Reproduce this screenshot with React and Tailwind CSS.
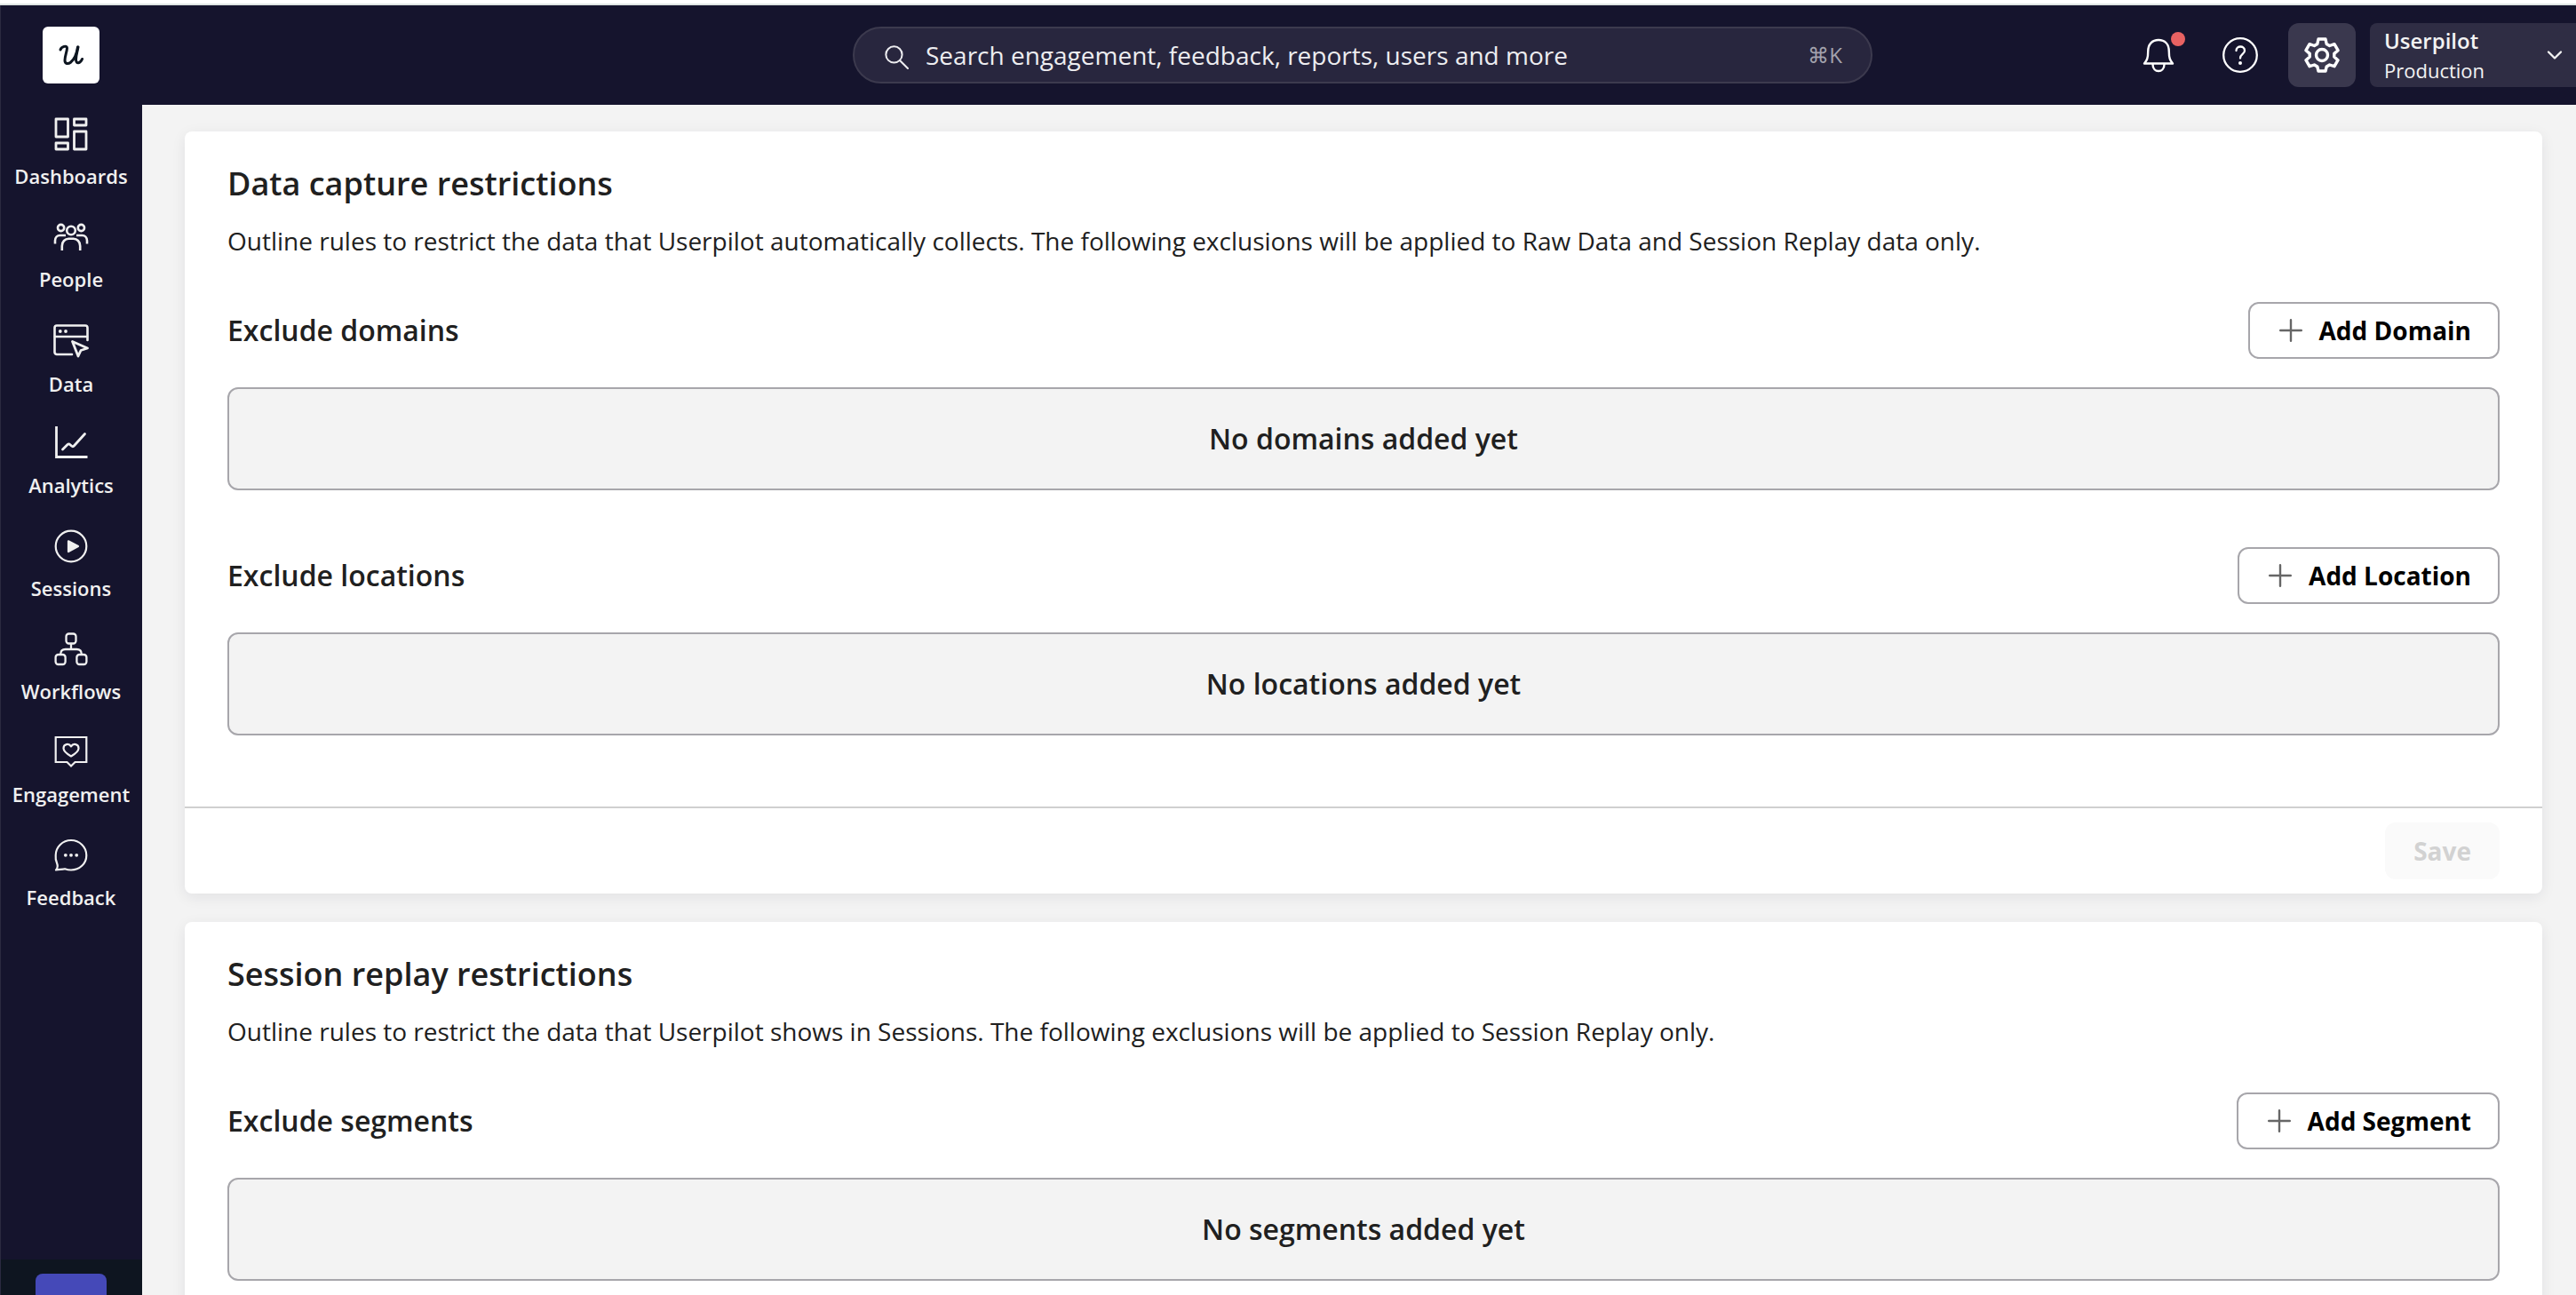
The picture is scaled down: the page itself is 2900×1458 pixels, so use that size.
import { FiChevronDown } from "react-icons/fi";

const navItems = [
  { label: "Dashboards", icon: <DashboardsIcon />, labelClass: "mt-3" },
  { label: "People", icon: <PeopleIcon />, labelClass: "mt-3" },
  { label: "Data", icon: <DataIcon />, labelClass: "mt-3.5" },
  { label: "Analytics", icon: <AnalyticsIcon />, labelClass: "mt-3" },
  { label: "Sessions", icon: <SessionsIcon />, labelClass: "mt-3" },
  { label: "Workflows", icon: <WorkflowsIcon />, labelClass: "mt-3" },
  { label: "Engagement", icon: <EngagementIcon />, labelClass: "mt-3" },
  { label: "Feedback", icon: <FeedbackIcon />, labelClass: "mt-3" },
];

function Svg({ children, className = "size-10", ...rest }) {
  return (
    <svg
      viewBox="0 0 40 40"
      fill="none"
      stroke="currentColor"
      strokeWidth="2.6"
      strokeLinecap="round"
      strokeLinejoin="round"
      className={className}
      {...rest}
    >
      {children}
    </svg>
  );
}

function DashboardsIcon() {
  return (
    <Svg strokeWidth="2.8">
      <rect x="3" y="3" width="13.5" height="20" />
      <rect x="23.5" y="3" width="13.5" height="7" />
      <rect x="3" y="30" width="13.5" height="7" />
      <rect x="23.5" y="17" width="13.5" height="20" />
    </Svg>
  );
}

function PeopleIcon() {
  return (
    <Svg strokeLinecap="butt">
      <circle cx="8.6" cy="9.5" r="3.6" />
      <circle cx="31.4" cy="9.5" r="3.6" />
      <circle cx="20" cy="12.5" r="4.8" />
      <path d="M9.8 35v-5c0-5 3.5-8.2 7.5-8.2h5.4c4 0 7.5 3.2 7.5 8.2v5" />
      <path d="M2 27.5V24c0-3.500 2.500-6 5.500-6H14" />
      <path d="M38 27.500V24c0-3.500-2.500-6-5.500-6H26" />
    </Svg>
  );
}

function DataIcon() {
  return (
    <Svg>
      <path d="M21 36H4a2.500 2.500 0 0 1-2.500-2.500V6A2.500 2.500 0 0 1 4 3.500h32A2.500 2.500 0 0 1 38.500 6V20" />
      <path d="M2 16h36" />
      <path d="M21.500 21.500l17 7.500-7.500 2.500-3 6.500z" strokeWidth="2.8" />
      <circle cx="7.8" cy="10" r="1.9" fill="currentColor" stroke="none" />
      <circle cx="14" cy="10" r="1.9" fill="currentColor" stroke="none" />
    </Svg>
  );
}

function AnalyticsIcon() {
  return (
    <Svg strokeLinecap="butt" strokeLinejoin="miter" strokeWidth="2.8">
      <path d="M3.500 1v34.500h35" />
      <path d="M10.500 27l5.500-5.500c1-.9 2-.8 3 .2l1.500 1.300c1 .9 2 .9 3-.2L35.500 9.500" strokeLinecap="round" />
    </Svg>
  );
}

function SessionsIcon() {
  return (
    <Svg strokeWidth="2.2">
      <circle cx="20" cy="20" r="17.3" />
      <path d="M17 14.300l11 5.700-11 6z" fill="currentColor" />
    </Svg>
  );
}

function WorkflowsIcon() {
  return (
    <Svg strokeWidth="2.3">
      <rect x="14.5" y="2.5" width="11" height="11" rx="3" />
      <rect x="2.6" y="26" width="11" height="11" rx="3" />
      <rect x="26.4" y="26" width="11" height="11" rx="3" />
      <path d="M20 14v6M8.200 25.500c0-4 1.500-5.500 5.500-5.500h12.600c4 0 5.500 1.500 5.500 5.500" />
    </Svg>
  );
}

function EngagementIcon() {
  return (
    <Svg strokeWidth="2.2" strokeLinejoin="miter">
      <path d="M2.700 3h34.600v28H24.500L20 35.500 15.500 31H2.700z" />
      <path
        d="M20 24.500c-5-3-8.500-5.500-8.500-9 0-5 6-6 8.500-2.200 2.500-3.800 8.500-2.800 8.500 2.200 0 3.500-3.500 6-8.500 9z"
        strokeLinejoin="round"
      />
    </Svg>
  );
}

function FeedbackIcon() {
  return (
    <Svg strokeWidth="2.2">
      <path d="M3 36.500c2-2.200 2-5.500 1-8A17 17 0 0 1 2.700 20C2.700 10.500 10.500 3 20 3S37.300 10.500 37.300 20 29.500 36.500 20 36.500c-3 0-5-.6-7-1.300C9.500 36 6.500 35.700 3 36.500z" />
      <circle cx="13.8" cy="19.8" r="1.9" fill="currentColor" stroke="none" />
      <circle cx="20" cy="19.8" r="1.9" fill="currentColor" stroke="none" />
      <circle cx="26.2" cy="19.8" r="1.9" fill="currentColor" stroke="none" />
    </Svg>
  );
}

function Logo() {
  return (
    <div className="flex size-16 items-center justify-center rounded-md bg-white text-[#0d1520]">
      <svg viewBox="0 0 28 24" className="h-6 w-7" fill="none" stroke="currentColor" strokeLinecap="round">
        <path d="M2 6C3 2.500 9.500.5 9.500 4c0 4-2.500 9-2.500 14 0 4 3.500 4.500 6.500 2.200 4-3.200 7-10.200 8-17.200" strokeWidth="3" />
        <path d="M22 3c-1 5-2.500 9-2.500 14 0 5.500 5 4.500 7-.5" strokeWidth="3" />
      </svg>
    </div>
  );
}

function SearchBar() {
  return (
    <div className="flex h-16 w-[1148px] items-center rounded-full border-2 border-[#3c3a4e] bg-[#28263e] pr-8 pl-[34px] text-[#ededf0]">
      <Svg className="mt-1 size-[27px] shrink-0" strokeWidth="3">
        <circle cx="15.5" cy="15.5" r="13.5" />
        <path d="M25.500 25.500l13 13" />
      </Svg>
      <span className="ml-[19px] grow text-[28px] leading-none">
        Search engagement, feedback, reports, users and more
      </span>
      <span className="text-[24px] leading-none text-[#a3a2ad]">⌘K</span>
    </div>
  );
}

function TopBar() {
  return (
    <header className="flex h-28 shrink-0 items-center border-l border-[#2b2a40] bg-[#15142d] text-white">
      <div className="flex w-[159px] shrink-0 justify-center pr-px">
        <Logo />
      </div>
      <div className="flex grow pl-[800px]">
        <SearchBar />
      </div>
      <div className="relative mr-[52px] flex">
        <Svg className="size-10" strokeWidth="2.4">
          <path d="M4 29.500c3-3.500 4.200-6 4.200-13.500 0-8.500 4.800-13 11.800-13s11.800 4.500 11.800 13c0 7.500 1.200 10 4.200 13.500z" />
          <path d="M13.500 30.500c0 10 13 10 13 0" />
        </Svg>
        <span className="absolute -top-1.5 left-[34px] size-4 rounded-full bg-[#e86262]" />
      </div>
      <Svg className="mr-[34px] size-10" strokeWidth="2.3">
        <circle cx="20" cy="20" r="18.8" />
        <path d="M15.500 15c0-6 9.500-6 9.500 0 0 4-5 4-5 8.500" />
        <circle cx="20" cy="29" r="2" fill="currentColor" stroke="none" />
      </Svg>
      <div className="mr-4 flex h-[72px] w-[76px] items-center justify-center rounded-xl bg-[#3a384e]">
        <Svg className="size-10" strokeWidth="3.4">
          <path d="M16 2h8l1.200 5.500 3.400 2 5.400-1.800 4 7-4.200 3.700v3.600l4.200 3.700-4 7-5.400-1.700-3.400 2L24 38h-8l-1.200-5-3.400-2L6 32.700l-4-7L6.200 22v-3.600L2 14.700l4-7 5.400 1.800 3.400-2z" />
          <circle cx="20" cy="20" r="6.5" />
        </Svg>
      </div>
      <div className="flex h-[72px] w-[232px] items-center justify-between rounded-l-lg bg-[#2f2d44] pr-2.5 pl-4 text-[#f3f3f3]">
        <div>
          <div className="text-[24px] leading-[34px] font-semibold">Userpilot</div>
          <div className="text-[22px] leading-[32px]">Production</div>
        </div>
        <FiChevronDown className="size-7" />
      </div>
    </header>
  );
}

function Sidebar() {
  return (
    <aside className="flex w-40 shrink-0 flex-col border-l border-[#2b2a40] bg-[#15142d] text-[#f0f0f0]">
      <nav className="flex grow flex-col pt-[13px] pr-px">
        {navItems.map((item) => (
          <div key={item.label} className="flex h-[116px] shrink-0 flex-col items-center">
            {item.icon}
            <span className={`text-[22px] leading-[30px] font-semibold ${item.labelClass}`}>{item.label}</span>
          </div>
        ))}
      </nav>
      <div className="flex h-10 shrink-0 justify-center bg-[#0e1520] pt-4 pr-px">
        <div className="w-20 rounded-t-lg bg-[#4549b8]" />
      </div>
    </aside>
  );
}

function ExcludeSection({ title, button, empty }) {
  return (
    <section>
      <div className="flex h-16 items-center justify-between">
        <h3 className="text-[32px] font-semibold">{title}</h3>
        <button className="flex h-16 items-center rounded-xl border-2 border-[#a7a6ab] pr-[30px] pl-[33px] text-[28px] font-bold text-black">
          <svg viewBox="0 0 26 26" className="mr-[19px] size-[26px]" stroke="#666" strokeWidth="2.4" strokeLinecap="round">
            <path d="M13 1.200v23.600M1.200 13h23.600" />
          </svg>
          {button}
        </button>
      </div>
      <div className="mt-8 flex h-[116px] items-center justify-center rounded-xl border-2 border-[#a7a6ab] bg-[#f3f3f3] text-[32px] font-semibold">
        {empty}
      </div>
    </section>
  );
}

function Card({ title, description, children }) {
  return (
    <div className="rounded-lg bg-white shadow-[0_4px_16px_rgba(20,20,45,0.08)]">
      <div className="px-12 pt-8">
        <h2 className="text-[36px] leading-[54px] font-semibold">{title}</h2>
        <p className="mt-4 text-[28px] leading-[42px]">{description}</p>
      </div>
      {children}
    </div>
  );
}

function App() {
  return (
    <div className="flex h-[1458px] w-[2900px] flex-col overflow-hidden bg-white font-['Open_Sans',sans-serif] text-[#202020]">
      <div className="h-1.5 shrink-0 border-b-2 border-[#dfe5e3]" />
      <TopBar />
      <div className="flex min-h-0 grow">
        <Sidebar />
        <main className="grow overflow-hidden bg-[#f3f3f3] pt-[30px] pr-[38px] pl-12">
          <div className="flex flex-col gap-8">
            <Card
              title="Data capture restrictions"
              description="Outline rules to restrict the data that Userpilot automatically collects. The following exclusions will be applied to Raw Data and Session Replay data only."
            >
              <div className="flex flex-col gap-16 px-12 pt-12 pb-20">
                <ExcludeSection title="Exclude domains" button="Add Domain" empty="No domains added yet" />
                <ExcludeSection title="Exclude locations" button="Add Location" empty="No locations added yet" />
              </div>
              <div className="flex h-[98px] items-center justify-end border-t-2 border-[#d0d0d0] px-12">
                <button className="h-16 rounded-xl bg-[#fafafa] px-8 text-[28px] font-bold text-[#d2d2d2]">Save</button>
              </div>
            </Card>
            <Card
              title="Session replay restrictions"
              description="Outline rules to restrict the data that Userpilot shows in Sessions. The following exclusions will be applied to Session Replay only."
            >
              <div className="px-12 pt-12 pb-20">
                <ExcludeSection title="Exclude segments" button="Add Segment" empty="No segments added yet" />
              </div>
            </Card>
          </div>
        </main>
      </div>
    </div>
  );
}

export default App;
